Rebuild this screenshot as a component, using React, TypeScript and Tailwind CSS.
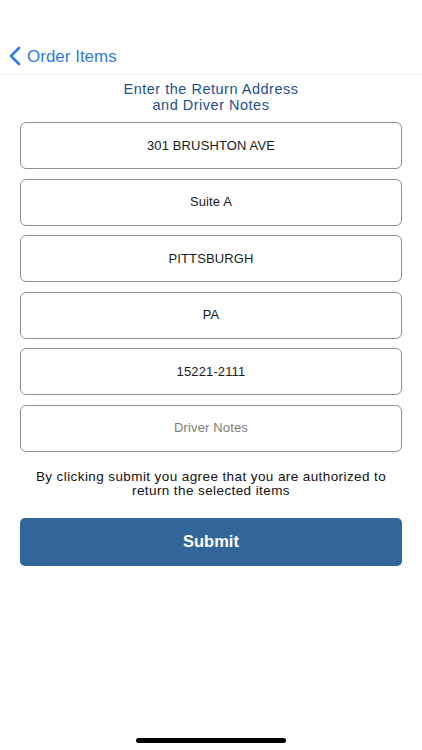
import React from "react";

const fields = [
  { value: "301 BRUSHTON AVE", placeholder: false },
  { value: "Suite A", placeholder: false },
  { value: "PITTSBURGH", placeholder: false },
  { value: "PA", placeholder: false },
  { value: "15221-2111", placeholder: false },
  { value: "Driver Notes", placeholder: true },
];

export default function App() {
  return (
    <div
      className="relative w-full h-[750px] bg-white overflow-hidden"
      style={{ fontFamily: '"Liberation Sans", Arial, sans-serif' }}
    >
      <div className="h-[75px] pt-[38px] border-b border-[#ededed] flex items-center pl-[8px]">
        <svg width="14" height="20" viewBox="0 0 14 20" className="mr-[5px]">
          <path
            d="M11 2 L3 10 L11 18"
            fill="none"
            stroke="#2f7be3"
            strokeWidth="2.6"
            strokeLinecap="round"
            strokeLinejoin="round"
          />
        </svg>
        <span className="text-[17px] text-[#2f7be3] leading-none">Order Items</span>
      </div>

      <div className="mt-[7px] text-center text-[14.5px] leading-[15.5px] tracking-[0.035em] text-[#1f4f8b]">
        <div>Enter the Return Address</div>
        <div>and Driver Notes</div>
      </div>

      <div className="mt-[9px] px-[20px] flex flex-col gap-[9.5px]">
        {fields.map((f) => (
          <div
            key={f.value}
            className="h-[47px] rounded-[6px] border-[1.5px] border-[#8f8f8f] flex items-center justify-center"
          >
            <span
              className={
                f.placeholder
                  ? "text-[13px] text-[#7d7d7d] tracking-[0.01em]"
                  : "text-[13px] text-[#1a1a1a] tracking-[0.01em]"
              }
            >
              {f.value}
            </span>
          </div>
        ))}
      </div>

      <div className="mt-[18px] px-[20px] text-center text-[13.5px] leading-[14px] tracking-[0.03em] text-[#111]">
        <div>By clicking submit you agree that you are authorized to</div>
        <div>return the selected items</div>
      </div>

      <div className="mt-[20px] px-[20px]">
        <div className="h-[48px] rounded-[5px] bg-[#326599] flex items-center justify-center">
          <span className="text-[16.5px] font-bold text-white">Submit</span>
        </div>
      </div>

      <div className="absolute left-[136px] top-[738px] w-[150px] h-[5px] rounded-full bg-black" />
    </div>
  );
}
